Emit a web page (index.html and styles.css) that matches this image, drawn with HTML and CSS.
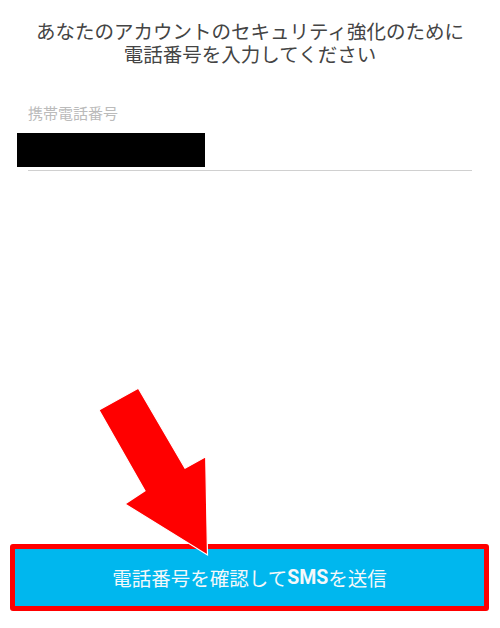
FILE: index.html
```html
<!DOCTYPE html>
<html lang="ja">
<head>
<meta charset="utf-8">
<link rel="stylesheet" href="styles.css">
</head>
<body>
<div class="page">
  <h1 class="title"><span class="title-line">あなたのアカウントのセキュリティ強化のために</span><span class="title-line">電話番号を入力してください</span></h1>
  <div class="field">
    <div class="label">携帯電話番号</div>
    <div class="value"></div>
    <div class="line"></div>
  </div>
  <div class="spacer"></div>
  <div class="button">電話番号を確認して<b>SMS</b>を送信</div>
  <svg class="arrow" width="500" height="628" viewBox="0 0 500 628">
    <polygon points="99,410 138.3,388.3 185,468.3 205.7,456.7 207.5,555 125,504 145,490.7" fill="#ff0000" stroke="#ffffff" stroke-width="1.2" stroke-linejoin="miter"/>
  </svg>
</div>
</body>
</html>
```
FILE: styles.css
```css
html, body {
  margin: 0;
  padding: 0;
  background: #ffffff;
}
.page {
  position: relative;
  width: 500px;
  height: 628px;
  display: flex;
  flex-direction: column;
  font-family: "Noto Sans CJK JP", "Noto Sans", sans-serif;
}
.title {
  margin: 19px 0 0;
  font-size: 19.5px;
  line-height: 23px;
  font-weight: 400;
  color: #444444;
  text-align: center;
}
.title-line {
  display: block;
}
.field {
  margin-top: 38px;
  display: flex;
  flex-direction: column;
}
.label {
  margin-left: 28px;
  font-size: 15px;
  line-height: 20px;
  color: #bbbbbb;
}
.value {
  margin: 10px 0 0 17px;
  width: 188px;
  height: 34px;
  background: #000000;
}
.line {
  margin: 3px 28px 0;
  height: 1px;
  background: #d0d0d0;
}
.spacer {
  flex: 1;
}
.button {
  margin: 0 11px 17px 10px;
  height: 57px;
  border: 5px solid #ff0000;
  border-radius: 3px;
  background: #00b7ee;
  color: #f4f8fa;
  font-size: 19.5px;
  display: flex;
  align-items: center;
  justify-content: center;
}
.button b {
  font-family: Roboto, "Noto Sans", sans-serif;
  font-weight: 700;
}
.arrow {
  position: absolute;
  left: 0;
  top: 0;
}
```
